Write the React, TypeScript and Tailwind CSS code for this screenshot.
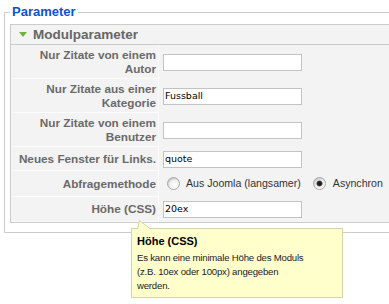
type Row = {
  label: string[];
  height: string;
  value: string | null;
};

const rows: Row[] = [
  { label: ["Nur Zitate von einem", "Autor"], height: "h-[34px]", value: "" },
  { label: ["Nur Zitate aus einer", "Kategorie"], height: "h-[34px]", value: "Fussball" },
  { label: ["Nur Zitate von einem", "Benutzer"], height: "h-[34px]", value: "" },
  { label: ["Neues Fenster für Links."], height: "h-[24px]", value: "quote" },
  { label: ["Abfragemethode"], height: "h-[26px]", value: null },
  { label: ["Höhe (CSS)"], height: "h-[25px]", value: "20ex" },
];

function Radio({ checked }: { checked?: boolean }) {
  return (
    <svg width="13" height="13" viewBox="0 0 13 13" className="shrink-0">
      <defs>
        <radialGradient id={checked ? "rg-on" : "rg-off"} cx="0.6" cy="0.65" r="0.6">
          <stop offset="0" stopColor="#ffffff" />
          <stop offset="0.7" stopColor="#f0f0f0" />
          <stop offset="1" stopColor="#c9c9c9" />
        </radialGradient>
      </defs>
      <circle cx="6.5" cy="6.5" r="6" fill={`url(#${checked ? "rg-on" : "rg-off"})`} stroke="#a9a9a9" />
      {checked && <circle cx="6.5" cy="6.5" r="2.8" fill="#1e1e1e" stroke="#777" strokeWidth="0.6" />}
    </svg>
  );
}

function TextInput({ value }: { value: string }) {
  return (
    <div className="flex h-[17px] w-[139px] items-center border border-[#c3c3c3] bg-white px-[1px] font-['DejaVu_Sans',Verdana,sans-serif] text-[9.5px] text-black">
      {value}
    </div>
  );
}

export default function App() {
  return (
    <div className="relative h-[304px] w-[389px] overflow-hidden bg-white font-['Liberation_Sans',Arial,sans-serif]">
      <fieldset className="ml-[4px] mt-[4px] w-[440px] border border-[#cccccc] px-[5px] pb-[9px] pt-[4px]">
        <legend className="px-[2px] text-[13px] font-bold leading-[16px] text-[#0b55c4]">Parameter</legend>

        <div className="border border-[#cccccc] bg-[#f3f3f3]">
          <div className="flex h-[20px] items-center border-b border-[#cccccc] pl-[8px]">
            <svg width="8" height="5" viewBox="0 0 8 5">
              <polygon points="0,0 8,0 4,5" fill="#72b23f" />
            </svg>
            <span className="ml-[6px] text-[13.5px] font-bold leading-none text-[#666666]">Modulparameter</span>
          </div>

          {rows.map((row) => (
            <div key={row.label.join(" ")} className={`flex ${row.height}`}>
              <div className="ml-[1px] flex w-[147px] flex-col items-end justify-center border-b border-r border-[#fbfbfb] pr-[2px] text-right text-[11.75px] font-bold leading-[14px] text-[#6a6a6a]">
                {row.label.map((line) => (
                  <span key={line} className="whitespace-nowrap">{line}</span>
                ))}
              </div>
              <div className="flex items-center pl-[4px]">
                {row.value !== null ? (
                  <TextInput value={row.value} />
                ) : (
                  <div className="flex items-center whitespace-nowrap text-[10.6px] text-[#333333]">
                    <span className="ml-[4px]"><Radio /></span>
                    <span className="ml-[6px]">Aus Joomla (langsamer)</span>
                    <span className="ml-[12px]"><Radio checked /></span>
                    <span className="ml-[7px]">Asynchron</span>
                  </div>
                )}
              </div>
            </div>
          ))}
        </div>
      </fieldset>

      <div className="absolute left-[131px] top-[228px] w-[212px] border border-[#d4d5aa] bg-[#ffffcc] px-[5px] pb-[4px] pt-[5px]">
        <svg width="16" height="11" viewBox="0 0 16 11" className="absolute left-[4px] top-[-10px]">
          <polygon points="1,11 3,1 15,11" fill="#ffffcc" />
          <polyline points="1.5,10 3.5,1.5 14.5,10" fill="none" stroke="#d4d5aa" />
        </svg>
        <p className="text-[11px] font-bold leading-[14px] text-black">Höhe (CSS)</p>
        <p className="mt-[3px] text-[9.6px] leading-[14px] tracking-[-0.2px] text-[#222222]">
          Es kann eine minimale Höhe des Moduls
          <br />
          (z.B. 10ex oder 100px) angegeben
          <br />
          werden.
        </p>
      </div>
    </div>
  );
}
